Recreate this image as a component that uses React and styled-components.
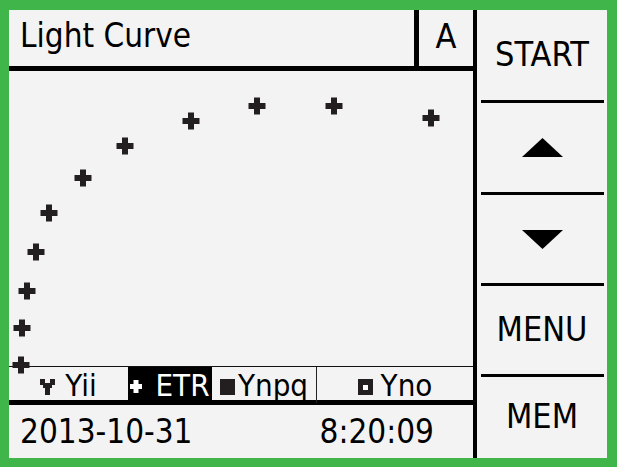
import React from 'react';
import styled, { createGlobalStyle } from 'styled-components';

const GlobalStyle = createGlobalStyle`
  html, body {
    margin: 0;
    padding: 0;
    background: #3fb54a;
  }
  * {
    box-sizing: border-box;
  }
`;

const points = [
  [12, 294], [13, 257], [18, 220], [27, 181], [40, 142], [74, 107],
  [116, 75], [182, 50], [248, 35], [325, 35], [422, 47],
];

const Screen = styled.div`
  width: 617px;
  height: 467px;
  padding: 10px 10px 9px 9px;
  background: #3fb54a;
  font-family: "DejaVu Sans Condensed", "DejaVu Sans", sans-serif;
  font-stretch: condensed;
  color: #000;
`;

const Panel = styled.div`
  display: grid;
  grid-template-columns: 464px 4px 130px;
  height: 448px;
  background: #f3f3f3;
`;

const LeftCol = styled.div`
  display: flex;
  flex-direction: column;
`;

const VLine = styled.div`
  background: #000;
`;

const TitleRow = styled.div`
  display: flex;
  height: 61px;
  border-bottom: 5px solid #000;
`;

const Title = styled.div`
  flex: 1;
  display: flex;
  align-items: center;
  padding: 0 0 5px 11px;
  font-size: 33px;
`;

const ModeCell = styled.div`
  width: 59px;
  border-left: 5px solid #000;
  display: flex;
  align-items: center;
  justify-content: center;
  padding-bottom: 5px;
  font-size: 34px;
`;

const Chart = styled.div`
  position: relative;
  height: 296px;
  border-bottom: 1px solid #111;
`;

const Plot = styled.svg`
  position: absolute;
  left: 0;
  top: 0;
  width: 100%;
  height: 100%;
  overflow: visible;
  z-index: 2;
`;

const Legend = styled.div`
  display: grid;
  grid-template-columns: 119px 84px 104px 1px 156px;
  height: 38px;
  border-bottom: 5px solid #000;
`;

const LegendItem = styled.div`
  display: flex;
  align-items: center;
  justify-content: center;
  gap: ${p => p.$gap}px;
  background: ${p => (p.$active ? '#000' : 'transparent')};
  color: ${p => (p.$active ? '#fff' : '#000')};
  font-size: 31px;
  svg {
    margin-top: 3px;
    flex: none;
  }
`;

const LegendSep = styled.div`
  background: #222;
`;

const DateRow = styled.div`
  flex: 1;
  display: flex;
  align-items: center;
  justify-content: space-between;
  padding: 0 39px 0 11px;
  font-size: 33px;
`;

const RightCol = styled.div`
  display: flex;
  flex-direction: column;
`;

const Key = styled.div`
  height: ${p => p.$h}px;
  display: flex;
  align-items: center;
  justify-content: center;
  padding-bottom: ${p => (p.$icon ? 0 : 3)}px;
  font-size: 34px;
`;

const KeySep = styled.div`
  height: 3px;
  margin: 0 3px 0 4px;
  background: #000;
`;

const Marker = ({ x, y }) => (
  <path
    d={`M${x - 3} ${y - 8.5}h6v5.5h5.5v6h-5.5v5.5h-6v-5.5h-5.5v-6h5.5z`}
    fill="#231f20"
  />
);

const YiiIcon = () => (
  <svg width="15" height="16" viewBox="0 0 15 16">
    <path d="M0 0h5v4h5v-4h5v6h-3v3h-2v7h-5v-7h-2v-3h-3z" fill="#231f20" />
  </svg>
);

const PlusIcon = () => (
  <svg width="12" height="13" viewBox="0 0 12 13">
    <path d="M3.5 0h5v4h3.5v5h-3.5v4h-5v-4h-3.5v-5h3.5z" fill="#fff" />
  </svg>
);

const SquareIcon = ({ hollow }) => (
  <svg width="15" height="16" viewBox="0 0 15 16">
    <rect width="15" height="16" fill="#231f20" />
    {hollow && <rect x="5" y="6" width="5" height="5" fill="#fff" />}
  </svg>
);

const Triangle = ({ down }) => (
  <svg width="41" height="19" viewBox="0 0 41 19">
    <polygon points={down ? '0,0 41,0 20.5,19' : '20.5,0 41,19 0,19'} fill="#000" />
  </svg>
);

const App = () => {
  return (
    <Screen>
      <GlobalStyle />
      <Panel>
        <LeftCol>
          <TitleRow>
            <Title>Light Curve</Title>
            <ModeCell>A</ModeCell>
          </TitleRow>
          <Chart>
            <Plot>
              {points.map(([x, y], i) => (
                <Marker key={i} x={x} y={y} />
              ))}
            </Plot>
          </Chart>
          <Legend>
            <LegendItem $gap={10}>
              <YiiIcon />
              <span>Yii</span>
            </LegendItem>
            <LegendItem $gap={13} $active>
              <PlusIcon />
              <span>ETR</span>
            </LegendItem>
            <LegendItem $gap={3}>
              <SquareIcon />
              <span>Ynpq</span>
            </LegendItem>
            <LegendSep />
            <LegendItem $gap={8}>
              <SquareIcon hollow />
              <span>Yno</span>
            </LegendItem>
          </Legend>
          <DateRow>
            <span>2013-10-31</span>
            <span>8:20:09</span>
          </DateRow>
        </LeftCol>
        <VLine />
        <RightCol>
          <Key $h={90}>START</Key>
          <KeySep />
          <Key $h={89} $icon>
            <Triangle />
          </Key>
          <KeySep />
          <Key $h={88} $icon>
            <Triangle down />
          </Key>
          <KeySep />
          <Key $h={88}>MENU</Key>
          <KeySep />
          <Key $h={81}>MEM</Key>
        </RightCol>
      </Panel>
    </Screen>
  );
};

export default App;
